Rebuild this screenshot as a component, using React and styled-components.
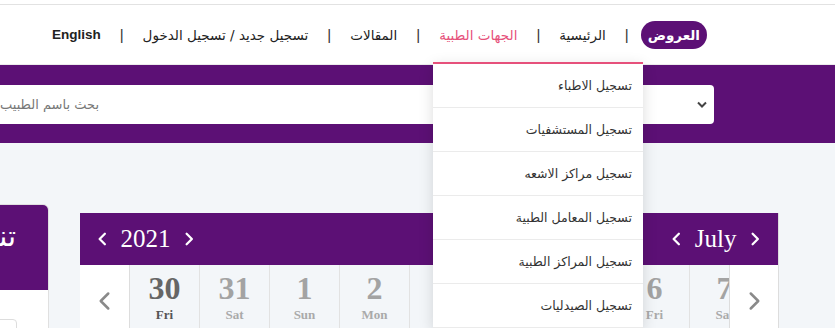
import styled, { createGlobalStyle } from 'styled-components';

const GlobalStyle = createGlobalStyle`
  html, body {
    margin: 0;
    padding: 0;
    background: #f3f6f9;
    overflow: hidden;
  }
  body {
    direction: rtl;
    font-family: "DejaVu Sans", "Noto Sans", sans-serif;
  }
`;

const purple = '#5c1075';
const pink = '#e6517b';

const TopStrip = styled.div`
  height: 4px;
  background: #fff;
`;

const Nav = styled.nav`
  position: relative;
  height: 59px;
  background: #fff;
  border-top: 1px solid #e2e2e2;
  border-bottom: 1px solid #ececec;
  display: flex;
  align-items: center;
  padding-right: 128px;
  font-size: 13.5px;
`;

const NavLink = styled.a`
  color: ${(p) => (p.$active ? pink : '#222')};
  text-decoration: none;
  white-space: nowrap;
  font-family: ${(p) => (p.$latin ? '"Liberation Sans", sans-serif' : 'inherit')};
  font-weight: ${(p) => (p.$latin ? 700 : 400)};
`;

const Pill = styled.a`
  background: ${purple};
  color: #fff;
  font-weight: 700;
  border-radius: 14px;
  height: 28px;
  padding: 0 7px;
  display: flex;
  align-items: center;
  text-decoration: none;
  margin-top: 1px;
  margin-left: -7px;
`;

const Sep = styled.span`
  color: #333;
  font-family: "Liberation Sans", sans-serif;
  font-size: 15px;
  margin: 0 19px;
`;

const Dropdown = styled.ul`
  position: absolute;
  top: 57px;
  right: 192px;
  width: 210px;
  margin: 0;
  padding: 0;
  list-style: none;
  background: #fff;
  border-top: 2px solid ${pink};
  box-shadow: 0 4px 14px rgba(0, 0, 0, 0.14);
  z-index: 10;
`;

const DropItem = styled.li`
  height: 43px;
  border-bottom: 1px solid #ebebeb;
  display: flex;
  align-items: center;
  padding-right: 11px;
  font-size: 12.5px;
  color: #333;
`;

const Band = styled.section`
  background: ${purple};
  height: 78px;
  display: flex;
  align-items: center;
  padding-right: 121px;
`;

const SearchBox = styled.div`
  display: flex;
  width: 900px;
  flex-shrink: 0;
  height: 39px;
  background: #fff;
  border-radius: 4px;
  overflow: hidden;
`;

const SelectPart = styled.div`
  width: 602px;
  flex-shrink: 0;
  display: flex;
  align-items: center;
  padding-right: 7px;
  box-sizing: border-box;
`;

const SearchInput = styled.input`
  flex: 1;
  min-width: 0;
  border: none;
  outline: none;
  background: transparent;
  font-family: inherit;
  font-size: 13px;
  padding: 0 13px 0 0;
  direction: rtl;
  &::placeholder {
    color: #777;
  }
`;

const Content = styled.main`
  display: flex;
  align-items: flex-start;
  gap: 31px;
  padding-right: 56px;
  padding-top: 61px;
`;

const Calendar = styled.div`
  direction: ltr;
  width: 699px;
  box-sizing: border-box;
  flex-shrink: 0;
  margin-top: 9px;
  border-right: 1px solid #ddd;
`;

const CalHead = styled.div`
  background: ${purple};
  height: 52px;
  display: flex;
  align-items: center;
  justify-content: space-between;
  padding: 0 18px 0 17px;
  color: #fff;
  font-family: "Liberation Serif", serif;
  font-size: 25px;
`;

const HeadGroup = styled.div`
  display: flex;
  align-items: center;
  gap: 13px;
`;

const DaysRow = styled.div`
  display: flex;
  height: 80px;
`;

const NavCell = styled.div`
  width: ${(p) => p.$w}px;
  flex-shrink: 0;
  background: #fff;
  display: flex;
  align-items: center;
  justify-content: center;
  border-right: ${(p) => (p.$border ? '1px solid #ddd' : 'none')};
  border-left: ${(p) => (p.$left ? '1px solid #ddd' : 'none')};
  box-sizing: border-box;
  padding-bottom: 8px;
`;

const Strip = styled.div`
  flex: 1;
  display: flex;
  overflow: hidden;
`;

const Day = styled.div`
  width: 70px;
  flex-shrink: 0;
  box-sizing: border-box;
  border-right: 1px solid #e2e2e2;
  background: #f3f6f9;
  display: flex;
  flex-direction: column;
  align-items: center;
  font-family: "Liberation Serif", serif;
  font-weight: 700;
  padding-top: 5px;
`;

const DayNum = styled.span`
  font-size: 32px;
  line-height: 36px;
  color: ${(p) => (p.$current ? '#666' : '#a3a3a3')};
`;

const DayName = styled.span`
  font-size: 13px;
  margin-top: 1px;
  color: ${(p) => (p.$current ? '#555' : '#aaa')};
`;

const SideCard = styled.aside`
  width: 300px;
  flex-shrink: 0;
  border: 1px solid #e0e0e0;
  border-radius: 6px 6px 0 0;
  overflow: hidden;
  background: #fff;
`;

const CardHead = styled.div`
  background: ${purple};
  height: 85px;
  color: #fff;
  font-size: 29px;
  padding: 14px 32px 0 0;
  box-sizing: border-box;
  white-space: nowrap;
`;

const CardBody = styled.div`
  height: 60px;
  padding: 29px 31px 0 0;
  box-sizing: border-box;
`;

const CardField = styled.div`
  height: 30px;
  border: 1px solid #ddd;
  border-radius: 4px;
`;

function Chevron({ dir = 'left', color = '#fff', size = 14, w = 2.6 }) {
  const d = dir === 'left' ? 'M9 2 L3 8 L9 14' : 'M3 2 L9 8 L3 14';
  return (
    <svg width={size * 0.75} height={size} viewBox="0 0 12 16">
      <path d={d} fill="none" stroke={color} strokeWidth={w} strokeLinecap="round" strokeLinejoin="round" />
    </svg>
  );
}

const ArrowSvg = styled.svg`
  flex-shrink: 0;
`;

function SelectArrow() {
  return (
    <ArrowSvg width="10" height="7" viewBox="0 0 10 7">
      <path d="M1 1.5 L5 5.5 L9 1.5" fill="none" stroke="#444" strokeWidth="2" />
    </ArrowSvg>
  );
}

const menu = [
  'تسجيل الاطباء',
  'تسجيل المستشفيات',
  'تسجيل مراكز الاشعه',
  'تسجيل المعامل الطبية',
  'تسجيل المراكز الطبية',
  'تسجيل الصيدليات',
];

const days = [
  ['30', 'Fri'],
  ['31', 'Sat'],
  ['1', 'Sun'],
  ['2', 'Mon'],
  ['3', 'Tue'],
  ['4', 'Wed'],
  ['5', 'Thu'],
  ['6', 'Fri'],
  ['7', 'Sat'],
  ['8', 'Sun'],
];

export default function App() {
  return (
    <>
      <GlobalStyle />
      <TopStrip />
      <Nav>
        <Pill href="#">العروض</Pill>
        <Sep>|</Sep>
        <NavLink href="#">الرئيسية</NavLink>
        <Sep>|</Sep>
        <NavLink href="#" $active>الجهات الطبية</NavLink>
        <Sep>|</Sep>
        <NavLink href="#">المقالات</NavLink>
        <Sep>|</Sep>
        <NavLink href="#">تسجيل جديد / تسجيل الدخول</NavLink>
        <Sep>|</Sep>
        <NavLink href="#" $latin>English</NavLink>
        <Dropdown>
          {menu.map((m) => (
            <DropItem key={m}>{m}</DropItem>
          ))}
        </Dropdown>
      </Nav>
      <Band>
        <SearchBox>
          <SelectPart>
            <SelectArrow />
          </SelectPart>
          <SearchInput placeholder="بحث باسم الطبيب" />
        </SearchBox>
      </Band>
      <Content>
        <Calendar>
          <CalHead>
            <HeadGroup>
              <Chevron dir="left" />
              <span>2021</span>
              <Chevron dir="right" />
            </HeadGroup>
            <HeadGroup>
              <Chevron dir="left" />
              <span>July</span>
              <Chevron dir="right" />
            </HeadGroup>
          </CalHead>
          <DaysRow>
            <NavCell $w={50} $border>
              <Chevron dir="left" color="#8a8a8a" size={20} w={2} />
            </NavCell>
            <Strip>
              {days.map(([n, d], i) => (
                <Day key={i}>
                  <DayNum $current={i === 0}>{n}</DayNum>
                  <DayName $current={i === 0}>{d}</DayName>
                </Day>
              ))}
            </Strip>
            <NavCell $w={49} $left>
              <Chevron dir="right" color="#8a8a8a" size={20} w={2} />
            </NavCell>
          </DaysRow>
        </Calendar>
        <SideCard>
          <CardHead>تنبيهات الحجز</CardHead>
          <CardBody>
            <CardField />
          </CardBody>
        </SideCard>
      </Content>
    </>
  );
}
